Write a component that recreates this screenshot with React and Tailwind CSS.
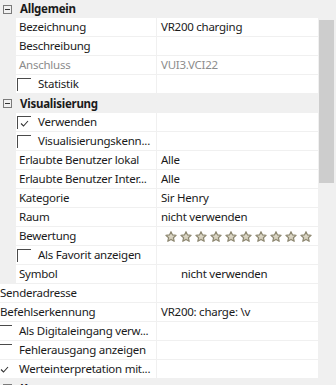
const font = { fontFamily: '"Noto Sans", "Liberation Sans", sans-serif' };

function Minus() {
  return (
    <div className="ml-[3px] mr-[8px] flex h-[9px] w-[9px] shrink-0 items-center justify-center border border-[#7a7a7a]">
      <div className="h-[1px] w-[5px] bg-[#333]" />
    </div>
  );
}

function Header({ title, first }) {
  return (
    <div className={`flex shrink-0 items-center bg-[#f0f0f0] ${first ? 'h-[18px]' : 'h-[19px]'}`}>
      <Minus />
      <span className="text-[11.5px] font-bold tracking-[-0.25px] text-[#1a1a1a]">{title}</span>
    </div>
  );
}

function Check({ checked, flat, noBox }) {
  return (
    <div
      className={`relative h-[13px] w-[14px] shrink-0 ${flat ? 'ml-[-2px]' : 'ml-[1px]'} ${noBox ? '' : 'border-l border-t border-[#4a4a4a]'}`}
    >
      {checked && (
        <svg className="absolute left-[2px] top-[3px]" width="9" height="7" viewBox="0 0 9 7" fill="none">
          <path d="M1 3.5l2.5 2.5L8 1" stroke="#333" strokeWidth="1.1" />
        </svg>
      )}
    </div>
  );
}

function Star() {
  return (
    <svg width="12" height="11" viewBox="0 0 12 11">
      <defs>
        <linearGradient id="sg" x1="0" y1="0" x2="0" y2="1">
          <stop offset="0" stopColor="#ece8dc" />
          <stop offset="1" stopColor="#c9c3ad" />
        </linearGradient>
      </defs>
      <path
        d="M6 0.7l1.5 3.2 3.6 0.4-2.7 2.4 0.8 3.6L6 8.5 2.8 10.3l0.8-3.6L0.9 4.3l3.6-0.4z"
        fill="url(#sg)"
        stroke="#8d8770"
        strokeWidth="1.2"
        strokeLinejoin="round"
      />
    </svg>
  );
}

function Row({ name, value, check, checked, flat, gray, noBox, valueClass = '', children }) {
  return (
    <div className={`flex h-[19px] shrink-0 ${flat ? '' : 'bg-[#f0f0f0]'}`}>
      {!flat && <div className="w-[16px] shrink-0" />}
      <div
        className={`flex shrink-0 items-center gap-[7px] overflow-hidden whitespace-nowrap border-b border-[#f0f0f0] bg-white ${flat ? 'w-[156px]' : 'w-[140px]'} ${check || flat ? '' : 'pl-[3px]'}`}
      >
        {check && <Check checked={checked} flat={flat} noBox={noBox} />}
        <span className={`text-[11.5px] tracking-[-0.25px] ${gray ? 'text-[#8c8c8c]' : 'text-[#1a1a1a]'}`}>{name}</span>
      </div>
      <div className="w-[1px] shrink-0 bg-[#f0f0f0]" />
      <div
        className={`flex flex-1 items-center overflow-hidden whitespace-nowrap border-b border-[#f0f0f0] bg-white pl-[4px] text-[11.5px] tracking-[-0.25px] ${gray ? 'text-[#8c8c8c]' : 'text-[#1a1a1a]'} ${valueClass}`}
      >
        {children ?? value}
      </div>
    </div>
  );
}

export default function App() {
  return (
    <div className="flex h-[385px] w-[336px] overflow-hidden bg-[#f0f0f0]" style={font}>
      {/* grid */}
      <div className="flex w-[318px] shrink-0 flex-col">
        <Header title="Allgemein" first />
        <Row name="Bezeichnung" value="VR200 charging" />
        <Row name="Beschreibung" value="" />
        <Row name="Anschluss" value="VUI3.VCI22" gray />
        <Row name="Statistik" check />

        <Header title="Visualisierung" />
        <Row name="Verwenden" check checked />
        <Row name="Visualisierungskenn..." check />
        <Row name="Erlaubte Benutzer lokal" value="Alle" />
        <Row name="Erlaubte Benutzer Inter..." value="Alle" />
        <Row name="Kategorie" value="Sir Henry" />
        <Row name="Raum" value="nicht verwenden" />
        <Row name="Bewertung" valueClass="gap-[3px] pl-[8px]">
          {Array.from({ length: 10 }).map((_, i) => (
            <Star key={i} />
          ))}
        </Row>
        <Row name="Als Favorit anzeigen" check />
        <Row name="Symbol" value="nicht verwenden" valueClass="pl-[24px]" />

        <Row name="Senderadresse" value="" flat />
        <Row name="Befehlserkennung" value="VR200: charge: \v" flat />
        <Row name="Als Digitaleingang verw..." check flat />
        <Row name="Fehlerausgang anzeigen" check flat />
        <Row name="Werteinterpretation mit..." check checked flat noBox />

        <Header title="Kamera" />
      </div>

      {/* scrollbar */}
      <div className="flex w-[18px] shrink-0 flex-col bg-[#f0f0f0]">
        <div className="ml-[1px] mt-[20px] h-[163px] w-[15px] bg-[#cdcdcd]" />
      </div>
    </div>
  );
}
